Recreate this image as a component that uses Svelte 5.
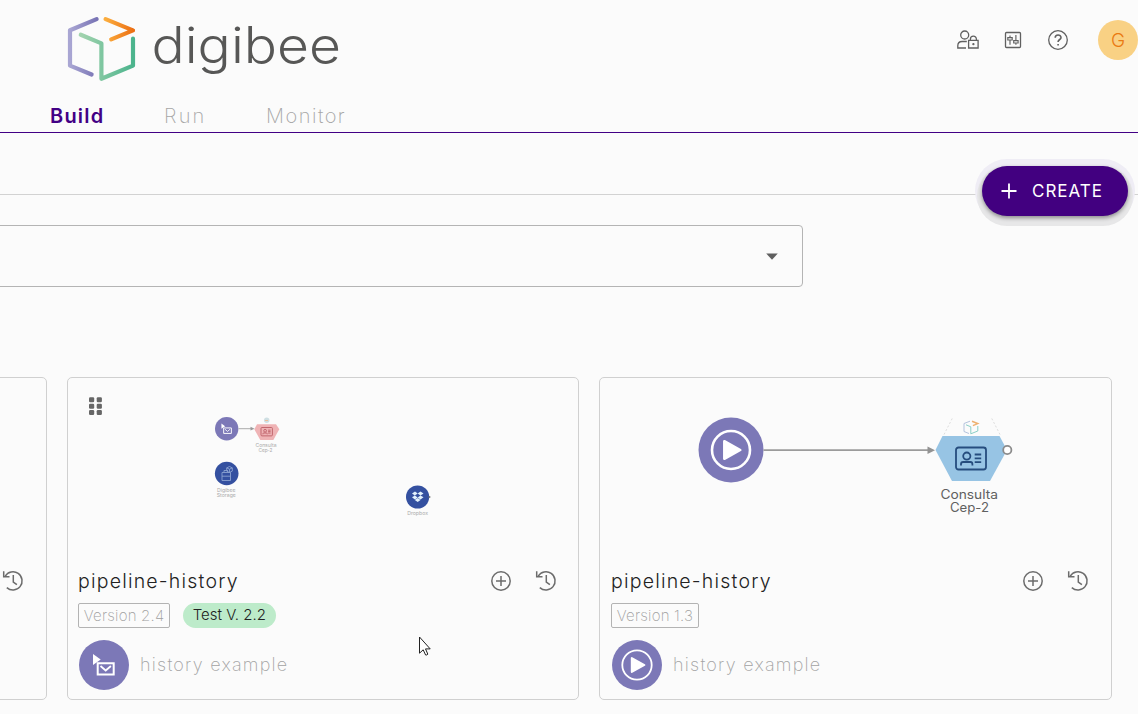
<script>
  const tabs = ['Build', 'Run', 'Monitor'];
  const cards = [
    { id: 'previous', kind: 'none', version: '', test: '' },
    { id: 'event', kind: 'mail', version: 'Version 2.4', test: 'Test V. 2.2' },
    { id: 'manual', kind: 'play', version: 'Version 1.3', test: '' }
  ];
</script>

{#snippet history()}
  <svg class="history" width="22" height="22" viewBox="0 0 22 22">
    <path d="M3.2 6.2A9.1 9.1 0 1 1 4.8 17.6" />
    <path d="M1.7 1.2v5.6h5.8M11.3 5v7l3.6 2.7" />
  </svg>
{/snippet}

{#snippet play()}
  <circle cx="25" cy="25" r="14.7" fill="none" stroke="#fff" stroke-width="1.8" />
  <path d="M19.8 18v14l12.6-7z" fill="#fff" stroke="#fff" stroke-width="2" stroke-linejoin="round" />
{/snippet}

{#snippet mail()}
  <path d="M14 14v11l7.7-5.5z" fill="#fff" />
  <path d="M18.7 23.2h16v11.4h-16z" fill="#7c78b7" stroke="#fff" stroke-width="2" />
  <path d="M21.5 26l5.2 4.5 5.2-4.5" fill="none" stroke="#fff" stroke-width="1.8" />
{/snippet}

{#snippet idcard()}
  <rect x="0" y="0" width="30" height="22" rx="2.5" />
  <circle cx="10.8" cy="8.6" r="3.6" />
  <path d="M5 18v-1.5q0-2 2.2-2h7.2q2 0 2 2V18M18.7 7h6.5M18.7 10.8h6.5M18.7 14.6h6.5" />
{/snippet}

<div class="page">
  <header>
    <div class="top">
      <svg class="logo" width="280" height="76" viewBox="64 12 280 76">
        <defs>
          <linearGradient id="purple"><stop stop-color="#a9a6d3" /><stop offset="1" stop-color="#7974b5" /></linearGradient>
          <linearGradient id="orange"><stop stop-color="#fbad3e" /><stop offset="1" stop-color="#ec7014" /></linearGradient>
          <linearGradient id="green"><stop stop-color="#a2d3ae" /><stop offset="1" stop-color="#4cb48d" /></linearGradient>
        </defs>
        <g fill="none" stroke-width="4.2" stroke-linecap="round" stroke-linejoin="round">
          <path stroke="url(#purple)" d="M96.6 19.1L70 30.3v35.3l21.6 8.9" />
          <path stroke="url(#orange)" d="M105.6 19.1L133 30.4l-21.8 9" />
          <path stroke="url(#green)" d="M80.8 34.8l20.6 8.6v35.4L133 65.6V38.7" />
        </g>
        <text x="151.5" y="62.5" textLength="189.5" lengthAdjust="spacingAndGlyphs">digibee</text>
      </svg>
      <div class="tools">
        <svg width="24" height="20" viewBox="0 0 24 20">
          <circle cx="8.7" cy="5" r="4" />
          <path d="M10 18H1.8v-2.2q0-4.3 4.3-4.3h4.7M12.6 10.4h9.5V18h-9.5zM14.4 10.4V9.2a3 3 0 0 1 6 0v1.2" />
          <circle cx="17.4" cy="14.2" r=".5" />
        </svg>
        <svg width="18" height="18" viewBox="0 0 18 18">
          <rect x="1.5" y="1.5" width="15" height="15" rx="1" />
          <path d="M6 4.5v2M3.8 9V6.6h4.4V9zM6 9v4.8M11.9 4v5.5M9.7 12V9.6h4.4V12zM11.9 12v1.8" stroke-width="1.15" />
        </svg>
        <svg width="22" height="22" viewBox="0 0 22 22">
          <circle cx="11" cy="11" r="9.3" />
          <path stroke-width="1.6" d="M8.2 8.7c0-3.6 5.8-3.6 5.8 0 0 1.7-2.9 2-2.9 4.1v.2M11.1 15v1.5" />
        </svg>
        <div class="avatar">G</div>
      </div>
    </div>
    <nav>
      {#each tabs as tab, i}
        <a class:active={i === 0} class="tab{i}">{tab}</a>
      {/each}
    </nav>
  </header>

  <section class="toolbar">
    <button class="create">
      <svg width="16" height="16" viewBox="0 0 16 16"><path d="M8 .5v15M.5 8h15" /></svg>
      <span>CREATE</span>
    </button>
  </section>

  <div class="select"><svg width="12" height="7" viewBox="0 0 12 7"><path d="M.2.5h11.6L6 6.7z" /></svg></div>

  <main>
    {#each cards as card (card.id)}
      <article class={card.kind}>
        <div class="preview">
          {#if card.kind === 'mail'}
            <svg width="510" height="182" viewBox="68 378 510 182">
              <g fill="#666">
                {#each [397.3, 403.7, 410] as y}
                  <rect x="89" {y} width="5.2" height="5" rx="1.2" />
                  <rect x="96.7" {y} width="5.2" height="5" rx="1.2" />
                {/each}
              </g>
              <circle cx="226.7" cy="428.7" r="11.7" fill="#7c78b7" />
              <g transform="translate(214.7 416.8) scale(.48)">{@render mail()}</g>
              <path d="M238.5 428.7h13" stroke="#aaa" />
              <path d="M250.5 426.8l4 1.9-4 1.9z" fill="#999" />
              <path d="M257 424.2h19l3.3 5-6 10.8h-13l-6-10.8z" fill="#efb3b5" />
              <circle cx="266.7" cy="420.3" r="2.7" fill="#cfdfe3" />
              <path d="M265 420.5h3" stroke="#eebf9a" />
              <g class="id red" transform="translate(261 427.5) scale(.38)">{@render idcard()}</g>
              <g class="tiny"><text x="255.5" y="447" textLength="21" lengthAdjust="spacingAndGlyphs">Consulta</text><text x="258.5" y="451.5" textLength="14" lengthAdjust="spacingAndGlyphs">Cep-2</text></g>
              <circle cx="226.7" cy="473.5" r="11.8" fill="#3450a0" />
              <g fill="none" stroke="#8ba2d0" stroke-width=".9">
                <path d="M222 472.5h8.5v8H222zM222 476.2h8.5M224 472v-1.5h4" />
                <path d="M229.5 466.5l2.8 1.4v3.2l-2.8 1.4-2.8-1.4v-3.2zM226.7 467.9l2.8 1.3 2.8-1.3M229.5 469.2v3.2" />
              </g>
              <g class="tiny"><text x="217" y="492.3" textLength="18.5" lengthAdjust="spacingAndGlyphs">Digibee</text><text x="216.8" y="497" textLength="19" lengthAdjust="spacingAndGlyphs">Storage</text></g>
              <circle cx="417.6" cy="497" r="11.6" fill="#3450a0" />
              <circle cx="429.5" cy="497" r="1" fill="#777" />
              <path fill="#e2f1fc" d="M412 493.5l3-2 2.7 2-2.9 2zM417.7 493.5l2.8-2 3 2-3 2zM412 497.3l2.9-1.8 2.8 2-2.8 1.9zM417.7 497.5l2.8-2 3 1.8-3 2.1zM414.8 500l2.9-2 2.8 2-2.8 2z" />
              <g class="tiny"><text x="407.2" y="515.3" textLength="20.8" lengthAdjust="spacingAndGlyphs">Dropbox</text></g>
            </svg>
          {:else if card.kind === 'play'}
            <svg width="511" height="182" viewBox="600 378 511 182">
              <circle cx="731" cy="450" r="32.5" fill="#7c78b7" />
              <circle cx="731" cy="450" r="19" fill="none" stroke="#fff" stroke-width="2.6" />
              <path d="M724.3 441.2v17.6l16-8.8z" fill="#fff" stroke="#fff" stroke-width="2.5" stroke-linejoin="round" />
              <path d="M763.5 450.2H928" stroke="#9b9b9b" stroke-width="1.8" />
              <path d="M927.5 446.5l7.5 3.7-7.5 3.7z" fill="#929292" />
              <path d="M944 434.5l9-17.5M1000 434.5l-9-17.5" stroke="#ddd" stroke-dasharray="2 2" />
              <path d="M942.5 436h57l7.5 14-17 31h-38l-16.5-31z" fill="#97c4e4" />
              <g fill="none" stroke-width="1">
                <path d="M970 421.2l-6 2.3v8l5 2" stroke="#b4c3dd" />
                <path d="M966 424.8l4.8 2v7l7-2.8v-5" stroke="#8bcfc7" />
                <path d="M972 421.2l5.7 2.4-4.8 2" stroke="#eeb06f" stroke-width="1.5" />
              </g>
              <g class="id navy" transform="translate(956 447.5)">{@render idcard()}</g>
              <circle cx="1007.3" cy="450" r="4.1" fill="#fff" stroke="#8b8b8b" stroke-width="1.8" />
              <g class="caption"><text x="940.5" y="499" textLength="57.5" lengthAdjust="spacingAndGlyphs">Consulta</text><text x="950" y="512" textLength="39" lengthAdjust="spacingAndGlyphs">Cep-2</text></g>
            </svg>
          {/if}
        </div>
        <div class="title">
          <h2>{card.kind === 'none' ? '' : 'pipeline-history'}</h2>
          <svg class="add" width="22" height="22" viewBox="0 0 22 22">
            <circle cx="11" cy="11" r="9.2" /><path d="M11 6v10M6 11h10" />
          </svg>
          {@render history()}
        </div>
        {#if card.kind !== 'none'}
          <div class="badges">
            <span class="version">{card.version}</span>
            {#if card.test}<span class="test">{card.test}</span>{/if}
          </div>
          <div class="trigger">
            <svg width="50" height="50" viewBox="0 0 50 50">
              <circle cx="25" cy="25" r="25" fill="#7c78b7" />
              {#if card.kind === 'mail'}{@render mail()}{:else}{@render play()}{/if}
            </svg>
            <span>history example</span>
          </div>
        {/if}
      </article>
    {/each}
  </main>

  <svg class="cursor" width="14" height="21" viewBox="0 0 14 21">
    <path d="M1.5 1v16.2l3.7-3.4 2.4 5.2q1.5.5 2.2-.9l-2.3-5.2h4.7z" fill="#fff" stroke="#222" stroke-width="1" />
  </svg>
</div>

<style>
  :global(body) { background: #fbfbfb; }
  * { box-sizing: border-box; }
  .page {
    position: relative;
    width: 1138px;
    height: 714px;
    overflow: hidden;
    background: #fbfbfb;
    font-family: Inter, "Liberation Sans", sans-serif;
    font-weight: 300;
  }
  header { height: 133px; border-bottom: 1px solid #420085; }
  .top { display: flex; justify-content: space-between; height: 100px; padding: 12px 0 0 64px; }
  .logo text { font-size: 50px; font-weight: 300; fill: #575756; }
  .tools { display: flex; align-items: center; height: 56px; }
  .tools svg { fill: none; stroke: #606060; stroke-width: 1.3; }
  .tools svg:nth-child(2) { margin-left: 24px; }
  .tools svg:nth-child(3) { margin-left: 25px; }
  .avatar {
    width: 40px; height: 40px; margin-left: 29px; border-radius: 50%;
    background: #f9d184; color: #ea7a12; font-size: 19px; font-weight: 300;
    line-height: 41px; text-align: center;
  }
  nav { display: flex; padding-left: 50px; font-size: 20px; line-height: 32px; }
  nav a { color: #a6a6a6; font-weight: 200; }
  nav .active { color: #420085; font-weight: 600; letter-spacing: 1.2px; }
  .tab0 { width: 114px; }
  .tab1 { width: 102px; letter-spacing: 2.2px; }
  .tab2 { letter-spacing: 1.5px; }
  .toolbar { display: flex; justify-content: flex-end; height: 62px; padding: 33px 10px 0 0; border-bottom: 1px solid #d2d2d2; }
  .create {
    display: flex; align-items: center; flex: none; gap: 15px;
    width: 146px; height: 50px; padding: 0 0 0 19px;
    border: 0; border-radius: 25px; background: #420080; color: #fff;
    box-shadow: 0 2px 4px #0006, 0 5px 0 5px #e7e7e8, 0 0 0 7px #efedf5;
    font: 400 17px Inter, "Liberation Sans", sans-serif;
    letter-spacing: 1px;
  }
  .create svg { stroke: #fff; stroke-width: 1.8; }
  .select {
    display: flex; align-items: center; justify-content: flex-end;
    width: 813px; height: 62px; margin: 30px 0 0 -10px; padding: 1px 24px 0 0;
    border: 1px solid #b4b4b4; border-radius: 4px;
  }
  .select svg { fill: #5f5f5f; }
  main { display: grid; grid-template-columns: 512px 512px 513px; gap: 20px; margin: 90px 0 0 -465px; }
  article { height: 323px; border: 1px solid #d0d0d0; border-radius: 5px; }
  .preview { height: 182px; }
  .preview svg { display: block; }
  .title { display: flex; align-items: center; height: 42px; padding: 0 22px 0 11px; }
  .mail .title { padding: 0 21px 0 10px; }
  h2 { flex: 1; margin: 0; font-size: 19.5px; font-weight: 300; letter-spacing: 1.2px; color: #222; }
  .title svg { fill: none; stroke: #6c6c6c; stroke-width: 1.5; }
  .history { margin-left: 23px; }
  .badges { display: flex; align-items: center; gap: 13px; height: 26px; margin: 0 0 0 10px; }
  .version, .test { height: 25px; font-size: 15px; line-height: 24px; white-space: nowrap; }
  .version { padding: 0 4.8px; border: 1px solid #b3b3b3; border-radius: 2px; color: #a0a0a0; font-weight: 200; letter-spacing: .21px; }
  .test { padding: 0 9.6px; border-radius: 13px; background: #bdebca; color: #222; }
  .trigger { display: flex; align-items: center; gap: 11px; height: 50px; margin: 12px 0 0 11px; color: #a3a3a3; font-size: 18px; font-weight: 200; letter-spacing: 1.23px; }
  .trigger span { padding-bottom: 2px; }
  .play .badges { margin-left: 11px; }
  .play .trigger { margin-left: 12px; }
  .tiny { font-size: 4.8px; fill: #aaa; font-weight: 400; }
  .caption { font-size: 12.8px; fill: #606060; font-weight: 400; }
  .id { fill: none; stroke-width: 1.8; }
  .red { stroke: #bd6067; stroke-width: 2.4; }
  .navy { stroke: #264d7e; }
  .cursor { position: absolute; left: 418px; top: 636px; }
</style>
